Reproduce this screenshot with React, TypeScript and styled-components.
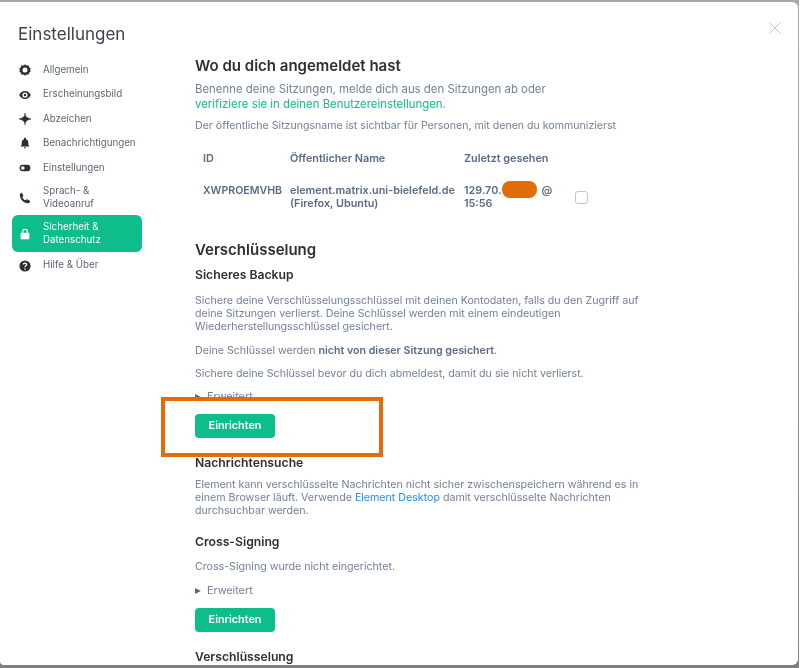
import React from "react";
import styled, { createGlobalStyle } from "styled-components";

const Global = createGlobalStyle`
  html, body { margin: 0; padding: 0; background: #fff; }
  body { font-family: Inter, "Noto Sans", sans-serif; }
  #root { width: 800px; height: 668px; overflow: hidden; }
`;

const Backdrop = styled.div`
  width: 799px;
  height: 668px;
  background: linear-gradient(#a8a8a8, #808080);
  overflow: hidden;
`;

const Dialog = styled.div`
  position: relative;
  box-sizing: border-box;
  width: 798px;
  height: 663px;
  margin-top: 2px;
  background: #fff;
  border-radius: 0 6px 6px 4px;
  display: grid;
  grid-template-columns: 195px 1fr;
  overflow: hidden;
  filter: blur(0.35px);
`;

const Close = styled.svg`
  position: absolute;
  top: 20px;
  right: 17px;
  width: 12px;
  height: 12px;
`;

const Sidebar = styled.aside`
  padding: 22px 0 0 12px;
`;

const Title = styled.h1`
  margin: 0 0 13px 6px;
  font-size: 17px;
  line-height: 21px;
  font-weight: 400;
  color: #3f4248;
`;

const Nav = styled.nav`
  width: 130px;
  display: flex;
  flex-direction: column;
`;

const NavItem = styled.div<{ $active?: boolean; $tall?: boolean }>`
  box-sizing: border-box;
  display: flex;
  align-items: center;
  gap: 12px;
  padding-left: 7px;
  min-height: ${(p) => (p.$active ? "37px" : p.$tall ? "35.5px" : "24.4px")};
  margin-bottom: ${(p) => (p.$active ? "1px" : "0")};
  border-radius: 6px;
  font-size: 9.75px;
  line-height: 12.5px;
  color: ${(p) => (p.$active ? "#fff" : "#5c6470")};
  background: ${(p) => (p.$active ? "#0dbd8b" : "transparent")};
`;

const NavIcon = styled.svg`
  flex: none;
  width: 12px;
  height: 12px;
  fill: currentColor;
`;

const IconTint = styled.span<{ $active?: boolean }>`
  display: flex;
  color: ${(p) => (p.$active ? "#fff" : "#2e2f32")};
`;

const Main = styled.main`
  padding: 17px 0 0 0;
  width: 445px;
`;

const H2 = styled.h2<{ $top?: number }>`
  margin: ${(p) => p.$top ?? 0}px 0 0;
  font-size: 15px;
  line-height: 20px;
  font-weight: 600;
  color: #2e2f32;
`;

const H3 = styled.h3<{ $top?: number }>`
  margin: ${(p) => p.$top ?? 0}px 0 0;
  font-size: 12.2px;
  line-height: 16px;
  font-weight: 600;
  color: #2e2f32;
`;

const Text = styled.p<{ $top?: number }>`
  margin: ${(p) => p.$top ?? 0}px 0 0;
  font-size: 10.65px;
  line-height: 13.2px;
  color: #737f96;
`;

const Intro = styled.p<{ $top?: number }>`
  margin: ${(p) => p.$top ?? 0}px 0 0;
  font-size: 11.4px;
  line-height: 14.5px;
  color: #737f96;
`;

const Note = styled.p<{ $top?: number }>`
  margin: ${(p) => p.$top ?? 0}px 0 0;
  font-size: 10.6px;
  line-height: 14px;
  white-space: nowrap;
  color: #737f96;
`;

const GreenLink = styled.span`
  color: #0dbd8b;
`;

const BlueLink = styled.span`
  color: #238cf5;
`;

const Strong = styled.strong`
  font-weight: 600;
  color: #5b6a85;
`;

const Table = styled.div`
  margin-top: 18.5px;
  margin-left: 8px;
  display: grid;
  grid-template-columns: 87px 174px 112px 14px;
  font-size: 10.8px;
  line-height: 13px;
  font-weight: 600;
  color: #5b6a85;
  align-items: center;
`;

const HeadCell = styled.div`
  height: 31px;
  box-sizing: border-box;
`;

const Cell = styled.div`
  padding-top: 1px;
  white-space: nowrap;
`;

const IdCell = styled(Cell)`
  align-self: start;
  font-size: 10.6px;
`;

const IpText = styled.span`
  position: relative;
  display: inline-block;
`;

const At = styled.span`
  margin-left: 40px;
`;

const Blob = styled.span`
  position: absolute;
  left: 38px;
  top: -3px;
  width: 35px;
  height: 17px;
  border-radius: 8px;
  background: #e36c0a;
`;

const Check = styled.div`
  width: 11px;
  height: 11px;
  border: 1px solid #c1c6cd;
  border-radius: 3px;
  margin: 2px 0 0 -1px;
`;

const Expander = styled.div<{ $top?: number }>`
  margin-top: ${(p) => p.$top ?? 0}px;
  display: flex;
  align-items: center;
  gap: 6px;
  font-size: 10.8px;
  line-height: 14px;
  color: #737f96;
`;

const Triangle = styled.span`
  width: 0;
  height: 0;
  border-left: 6px solid #5b6a85;
  border-top: 3.5px solid transparent;
  border-bottom: 3.5px solid transparent;
`;

const Button = styled.button<{ $top?: number }>`
  display: block;
  margin: ${(p) => p.$top ?? 0}px 0 0;
  width: 80px;
  height: 24px;
  padding: 0;
  border: 0;
  border-radius: 4px;
  background: #0dbd8b;
  color: #fff;
  font: 600 10.8px Inter, sans-serif;
`;

const Highlight = styled.div`
  position: absolute;
  left: 161px;
  top: 395px;
  width: 222px;
  height: 60px;
  box-sizing: border-box;
  border: 4px solid #e36c0a;
`;

const icons: Record<string, React.ReactNode> = {
  gear: <path d="M6 .3l1.500 1.300 2-.3.6 1.900 1.600 1.100-.6 1.700.6 1.700-1.600 1.100-.6 1.900-2-.3L6 11.700 4.500 10.400l-2 .3-.6-1.900L.3 7.700.9 6 .3 4.300l1.600-1.100.6-1.900 2 .3L6 .3zM6 3.500a2.500 2.500 0 100 5 2.500 2.500 0 000-5z" fillRule="evenodd" />,
  eye: <path d="M6 2C3.200 2 1 4 .2 6 1 8 3.200 10 6 10s5-2 5.800-4C11 4 8.800 2 6 2zm0 1.400a2.600 2.600 0 110 5.200 2.600 2.600 0 010-5.200zm0 1.300a1.300 1.300 0 100 2.600 1.300 1.300 0 000-2.600z" fillRule="evenodd" />,
  star: <path d="M6 0c.2 3.300 1.300 5 6 6-4.700 1-5.800 2.700-6 6-.2-3.300-1.300-5-6-6 4.700-1 5.800-2.700 6-6z" stroke="currentColor" strokeWidth=".5" />,
  bell: <path d="M6 .8c.6 0 1 .4 1 1v.4c1.500.5 2.300 1.800 2.300 3.300v2.300l1 1.200v.5H1.700V9l1-1.200V5.500C2.700 4 3.500 2.700 5 2.200v-.4c0-.6.4-1 1-1zM4.800 10.300h2.400c0 .7-.5 1.100-1.200 1.100s-1.200-.4-1.200-1.100z" />,
  toggle: <path d="M3.800 2.800h4.400a3.200 3.200 0 010 6.400H3.800a3.200 3.200 0 010-6.400zm0 1.400a1.800 1.800 0 100 3.600 1.800 1.800 0 000-3.600z" fillRule="evenodd" />,
  phone: <path d="M2.800.8l1.500 2.600c.1.300.1.600-.1.800l-.9 1c.6 1.400 1.600 2.400 3.100 3.100l1-.9c.2-.2.5-.2.8-.1l2.600 1.500c.3.200.4.500.3.800-.3 1-1.200 1.700-2.300 1.600C4.500 10.900 1.100 7.500.9 3.200.8 2.100 1.400 1.100 2.400.7c.2-.1.300 0 .4.100z" />,
  lock: <path d="M6 .7a3 3 0 013 3v1.100h.4c.6 0 1 .4 1 1v4.400c0 .6-.4 1-1 1H2.600c-.6 0-1-.4-1-1V5.800c0-.6.4-1 1-1H3V3.700a3 3 0 013-3zm0 1.300c-1 0-1.700.7-1.700 1.700v1.100h3.400V3.700C7.700 2.700 7 2 6 2z" fillRule="evenodd" />,
  help: <path d="M6 .4a5.600 5.600 0 110 11.200A5.600 5.600 0 016 .4zm-.7 8v1.300h1.400V8.400H5.300zM6 2.500c-1.300 0-2.200.8-2.300 2h1.300c.1-.5.400-.8 1-.8s.9.300.9.800c0 .4-.2.600-.7 1-.6.400-.9.900-.9 1.700h1.300c0-.5.200-.7.700-1.100.6-.4 1-1 1-1.700 0-1.100-1-1.900-2.300-1.900z" fillRule="evenodd" />,
};

const items = [
  { icon: "gear", label: "Allgemein" },
  { icon: "eye", label: "Erscheinungsbild" },
  { icon: "star", label: "Abzeichen" },
  { icon: "bell", label: "Benachrichtigungen" },
  { icon: "toggle", label: "Einstellungen" },
  { icon: "phone", label: "Sprach- &\nVideoanruf", tall: true },
  { icon: "lock", label: "Sicherheit &\nDatenschutz", tall: true, active: true },
  { icon: "help", label: "Hilfe & Über" },
];

const Label = styled.span`
  white-space: pre-line;
`;

export default function App() {
  return (
    <Backdrop>
      <Global />
      <Dialog>
        <Close viewBox="0 0 12 12">
          <path d="M.5.5l11 11M11.500.5l-11 11" stroke="#c4c6ca" strokeWidth="1" fill="none" />
        </Close>
        <Sidebar>
          <Title>Einstellungen</Title>
          <Nav>
            {items.map((it) => (
              <NavItem key={it.icon} $active={it.active} $tall={it.tall}>
                <IconTint $active={it.active}>
                  <NavIcon viewBox="0 0 12 12">{icons[it.icon]}</NavIcon>
                </IconTint>
                <Label>{it.label}</Label>
              </NavItem>
            ))}
          </Nav>
        </Sidebar>
        <Main>
          <H2 $top={37}>Wo du dich angemeldet hast</H2>
          <Intro $top={6}>
            Benenne deine Sitzungen, melde dich aus den Sitzungen ab oder
            <br />
            <GreenLink>verifiziere sie in deinen Benutzereinstellungen</GreenLink>.
          </Intro>
          <Note $top={8}>Der öffentliche Sitzungsname ist sichtbar für Personen, mit denen du kommunizierst</Note>
          <Table>
            <HeadCell>ID</HeadCell>
            <HeadCell>Öffentlicher Name</HeadCell>
            <HeadCell>Zuletzt gesehen</HeadCell>
            <HeadCell />
            <IdCell>XWPROEMVHB</IdCell>
            <Cell>
              element.matrix.uni-bielefeld.de
              <br />
              (Firefox, Ubuntu)
            </Cell>
            <Cell>
              <IpText>
                129.70.
                <Blob />
                <At>@</At>
              </IpText>
              <br />
              15:56
            </Cell>
            <Check />
          </Table>
          <H2 $top={30.5}>Verschlüsselung</H2>
          <H3 $top={7}>Sicheres Backup</H3>
          <Text $top={10.5}>
            Sichere deine Verschlüsselungsschlüssel mit deinen Kontodaten, falls du den Zugriff auf
            deine Sitzungen verlierst. Deine Schlüssel werden mit einem eindeutigen
            Wiederherstellungsschlüssel gesichert.
          </Text>
          <Text $top={10.5}>
            Deine Schlüssel werden <Strong>nicht von dieser Sitzung gesichert</Strong>.
          </Text>
          <Text $top={10}>Sichere deine Schlüssel bevor du dich abmeldest, damit du sie nicht verlierst.</Text>
          <Expander $top={9.5}>
            <Triangle />
            Erweitert
          </Expander>
          <Button $top={10}>Einrichten</Button>
          <H3 $top={17}>Nachrichtensuche</H3>
          <Text $top={7.4}>
            Element kann verschlüsselte Nachrichten nicht sicher zwischenspeichern während es in
            einem Browser läuft. Verwende <BlueLink>Element Desktop</BlueLink> damit verschlüsselte
            Nachrichten durchsuchbar werden.
          </Text>
          <H3 $top={16}>Cross-Signing</H3>
          <Text $top={10.4}>Cross-Signing wurde nicht eingerichtet.</Text>
          <Expander $top={10.4}>
            <Triangle />
            Erweitert
          </Expander>
          <Button $top={10}>Einrichten</Button>
          <H3 $top={17}>Verschlüsselung</H3>
        </Main>
        <Highlight />
      </Dialog>
    </Backdrop>
  );
}
